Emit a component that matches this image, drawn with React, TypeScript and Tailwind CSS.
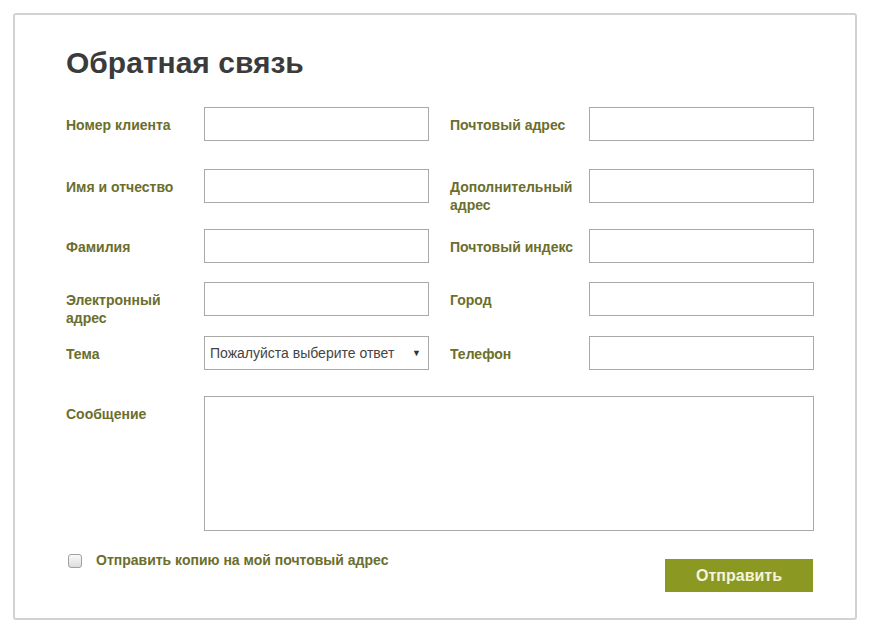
import { useState } from 'react'

const left = [
  { label: 'Номер клиента' },
  { label: 'Имя и отчество' },
  { label: 'Фамилия' },
  { label: 'Электронный адрес' },
]

const right = [
  { label: 'Почтовый адрес' },
  { label: 'Дополнительный адрес' },
  { label: 'Почтовый индекс' },
  { label: 'Город' },
  { label: 'Телефон' },
]

const rowHeights = ['h-[62px]', 'h-[60px]', 'h-[53px]', 'h-[54px]', 'h-[60px]']

function Field({ label, wide, children }: { label: string; wide?: boolean; children?: React.ReactNode }) {
  return (
    <div className="flex">
      <label
        className={`${wide ? 'w-[139px]' : 'w-[138px]'} shrink-0 pt-[9px] pr-3 text-[14px] leading-[18px] font-bold text-[#6b6e2c]`}
      >
        {label}
      </label>
      {children ?? <input type="text" className="h-[34px] w-[225px] border border-[#a9a9a9] bg-white px-2 outline-none" />}
    </div>
  )
}

export default function App() {
  const [copy, setCopy] = useState(false)

  return (
    <div className="min-h-[637px] bg-white p-[13px] font-['Liberation_Sans',Arial,sans-serif]">
      <div className="h-[607px] w-[844px] rounded-[3px] border-2 border-[#d2d2d2] pl-[51px] pt-[29px]">
        <h1 className="text-[30px] leading-[38px] font-bold text-[#3b3b3b]">Обратная связь</h1>

        {/* Form rows */}
        <div className="mt-[25px]">
          {rowHeights.map((h, i) => (
            <div key={i} className={`flex gap-[21px] ${h}`}>
              {i < 4 ? (
                <Field label={left[i].label} />
              ) : (
                <Field label="Тема">
                  <div className="relative flex h-[34px] w-[225px] items-center border border-[#a9a9a9] bg-white pl-[5px] text-[14px] text-[#444]">
                    Пожалуйста выберите ответ
                    <span className="absolute right-[7px] top-[10px] text-[9px] text-[#333]">▼</span>
                  </div>
                </Field>
              )}
              <Field label={right[i].label} wide />
            </div>
          ))}
        </div>

        {/* Message */}
        <div className="flex">
          <label className="w-[138px] shrink-0 pt-[9px] text-[14px] leading-[18px] font-bold text-[#6b6e2c]">
            Сообщение
          </label>
          <textarea className="h-[135px] w-[610px] resize-none border border-[#a9a9a9] outline-none" />
        </div>

        {/* Footer */}
        <div className="mt-[19px] flex w-[747px] items-start justify-between">
          <label className="flex items-center gap-[14px] pl-[2px]">
            <span
              onClick={() => setCopy(!copy)}
              className="h-[14px] w-[14px] rounded-[3px] border border-[#a0a0a0] bg-gradient-to-b from-[#fafafa] to-[#dcdcdc]"
            >
              {copy && <span className="block text-center text-[10px] leading-[12px]">✓</span>}
            </span>
            <span className="text-[14px] font-bold text-[#6b6e2c]">Отправить копию на мой почтовый адрес</span>
          </label>
          <button className="mt-[9px] h-[33px] w-[148px] bg-[#8b9923] text-[16px] font-bold text-[#f4f4dc]">
            Отправить
          </button>
        </div>
      </div>
    </div>
  )
}
